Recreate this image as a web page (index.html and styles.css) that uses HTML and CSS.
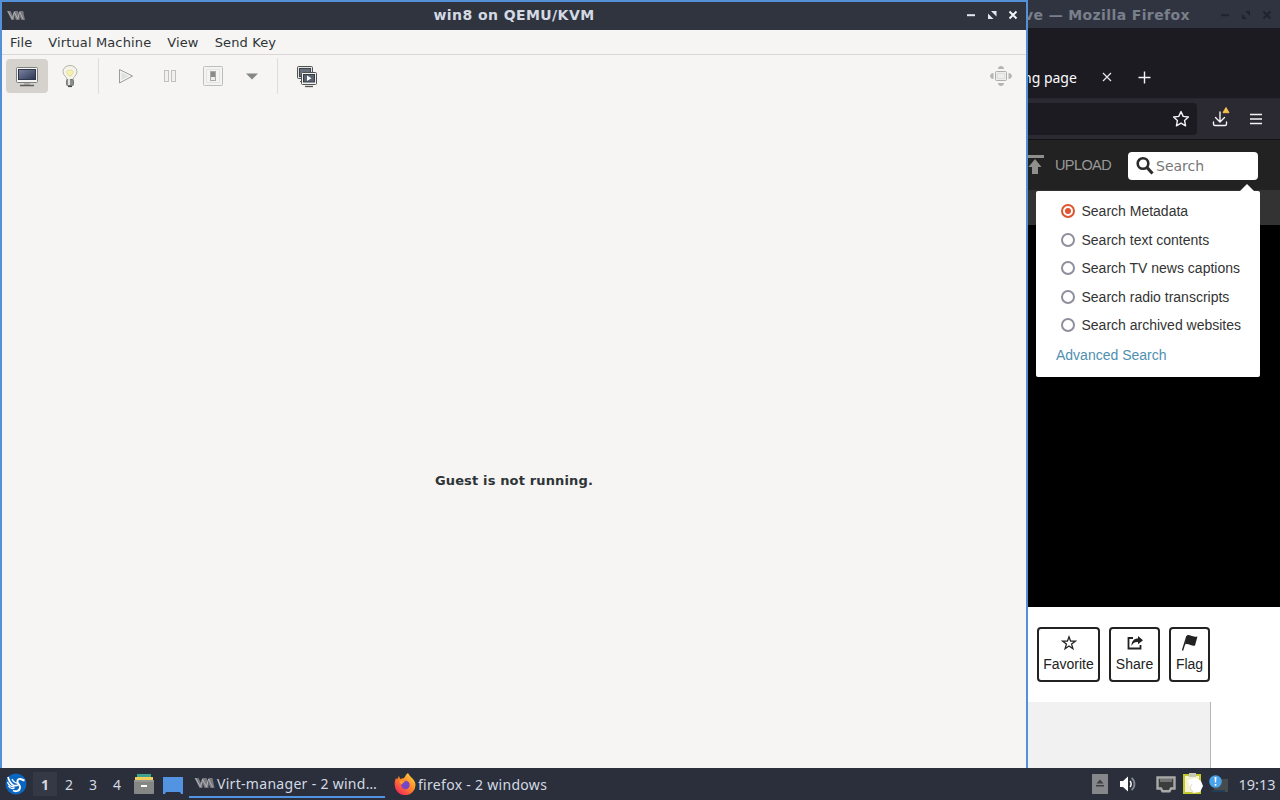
FILE: index.html
```
<!DOCTYPE html>
<html lang="en">
<head>
  <meta charset="UTF-8">
  <meta name="viewport" content="width=device-width, initial-scale=1.0">
  <title>win8 on QEMU/KVM</title>
  <link rel="stylesheet" href="styles.css">
</head>
<body>

  <svg class="defs" width="0" height="0">
    <defs>
      <linearGradient id="screen" x1="0" y1="0" x2="1" y2="1">
        <stop offset="0" stop-color="#7b86a4"/>
        <stop offset="1" stop-color="#2c3450"/>
      </linearGradient>
      <linearGradient id="fox" x1="1" y1="0" x2="0.2" y2="1">
        <stop offset="0" stop-color="#ffe14a"/>
        <stop offset="0.5" stop-color="#ff8a25"/>
        <stop offset="1" stop-color="#f0245e"/>
      </linearGradient>
      <symbol id="virt" viewBox="0 0 20 12">
        <path d="M0 1h4l3 6 1-6h4l2 6V1h4l2 10h-4l-2-4v4h-4l-2-5v5H5z" fill="#77787d"/>
        <path d="M1 1l5 9 2-8 4 8 2-8 4 8" stroke="#b4b5b9" stroke-width="1" fill="none"/>
      </symbol>
    </defs>
  </svg>

  <div class="desktop">

    <!-- Virtual machine window -->
    <section class="vm-window">
      <div class="vm-title">
        <svg class="vm-logo" width="18" height="11"><use href="#virt"/></svg>
        <h1>win8 on QEMU/KVM</h1>
        <svg class="win-buttons" width="56" height="14" viewBox="0 0 56 14">
          <path d="M3 7.2h8" stroke="#e4e7ee" stroke-width="2"/>
          <path d="M27 3h5.500v5.500zM24 5.500v5.500h5.500z" fill="#e4e7ee"/>
          <path d="M45.500 3.500l7 7M52.500 3.500l-7 7" stroke="#f3f4f8" stroke-width="2"/>
        </svg>
      </div>

      <nav class="menu">
        <span>File</span>
        <span>Virtual Machine</span>
        <span>View</span>
        <span>Send Key</span>
      </nav>

      <div class="toolbar">
        <button class="tool active">
          <svg width="24" height="24" viewBox="0 0 24 24">
            <rect x="1.500" y="3.500" width="21" height="15" rx="1" fill="#f4f4f2" stroke="#7e7f7c"/>
            <rect x="3.500" y="5.500" width="17" height="10" fill="url(#screen)" stroke="#30364a"/>
            <path d="M9 19h6v2H9z" fill="#aeb0ac"/>
            <path d="M5 21.500h14" stroke="#595b58" stroke-width="1.500"/>
          </svg>
        </button>
        <button class="tool bulb">
          <svg width="24" height="24" viewBox="0 0 24 24">
            <path d="M9 15.500c0-3-4-3.500-4-8a7 6 0 0 1 14 0c0 4.500-4 5-4 8z" fill="#f5f4e6" stroke="#b3b4ae"/>
            <path d="M8.500 8c1-2.500 6-2.500 7 0l-2.500 4h-2z" fill="#f6f3b2" stroke="#d8d593" stroke-width=".7"/>
            <rect x="8.500" y="15.500" width="7" height="6" rx="1" fill="#8c8e8b" stroke="#777975"/>
            <path d="M11 15v6" stroke="#e3e4e2" stroke-width="2"/>
            <path d="M10 22.500h4" stroke="#464845" stroke-width="1.200"/>
          </svg>
        </button>
        <i class="sep"></i>
        <button class="tool">
          <svg width="24" height="24" viewBox="0 0 24 24">
            <path d="M5.500 5.500v13.500L18.500 12z" fill="#f3f3f2" stroke="#9a9c99"/>
            <path d="M7.500 8.500v7.500l7-4z" fill="#dfe1de"/>
          </svg>
        </button>
        <button class="tool">
          <svg width="24" height="24" viewBox="0 0 24 24" fill="#f0f0ee" stroke="#c0c1be">
            <rect x="6.500" y="6.500" width="4" height="11"/>
            <rect x="13.500" y="6.500" width="4" height="11"/>
          </svg>
        </button>
        <button class="tool">
          <svg width="24" height="24" viewBox="0 0 24 24">
            <rect x="2.500" y="2.500" width="19" height="19" rx="1" fill="#f3f3f1" stroke="#bebfbc"/>
            <rect x="5.500" y="5.500" width="13" height="13" fill="#f4f4f2" stroke="#e4e4e2"/>
            <rect x="9.500" y="7.500" width="5" height="9" fill="#eee" stroke="#a9aaa7"/>
            <rect x="10" y="8" width="4" height="5" fill="#8a8c89"/>
          </svg>
        </button>
        <button class="tool narrow">
          <svg width="12" height="7" viewBox="0 0 12 7">
            <path d="M0 .5h12L6 6.500z" fill="#858784"/>
          </svg>
        </button>
        <i class="sep wide"></i>
        <button class="tool">
          <svg width="24" height="24" viewBox="0 0 24 24">
            <rect x="2.500" y="2.500" width="15" height="12" rx="1" fill="#e4e5e2" stroke="#50534f"/>
            <rect x="4.500" y="4.500" width="11" height="8" fill="#69717c" stroke="#3f454e"/>
            <path d="M5 17.500h5" stroke="#5c5e5b"/>
            <rect x="6.500" y="8.500" width="15" height="12" rx="1" fill="#f1f1ef" stroke="#50534f"/>
            <rect x="8.500" y="10.500" width="11" height="7.500" fill="#5b6370" stroke="#363c46"/>
            <path d="M12 11.500v5.500l4.500-2.700z" fill="#fff"/>
            <path d="M10 22.500h8" stroke="#50534f" stroke-width="1.300"/>
          </svg>
        </button>
        <button class="tool right">
          <svg width="24" height="24" viewBox="0 0 24 24">
            <rect x="6.500" y="7.500" width="11" height="9" rx="1" fill="#eeeeec" stroke="#adafac"/>
            <path d="M8.500 9.500h7v5h-7z" fill="none" stroke="#dddedb"/>
            <path d="M9 5c0-4 6-4 6 0zM9 19c0 4 6 4 6 0zM4.500 9c-4.500 0-4.500 6 0 6zM19.500 9c4.500 0 4.500 6 0 6z" fill="#b3b5b2"/>
          </svg>
        </button>
      </div>

      <div class="console">Guest is not running.</div>
    </section>

    <!-- Browser window behind it -->
    <section class="browser">
      <div class="browser-title">
        <span>ve — Mozilla Firefox</span>
        <svg width="56" height="14" viewBox="0 0 56 14">
          <path d="M3 7.200h8" stroke="#20232c" stroke-width="2"/>
          <path d="M27 3h5v5zM24 6v5h5z" fill="#20232c"/>
          <path d="M45.500 3.500l7 7M52.500 3.500l-7 7" stroke="#20232c" stroke-width="2"/>
        </svg>
      </div>
      <div class="tabs">
        <span class="tab-name">ng page</span>
        <svg width="10" height="10" viewBox="0 0 10 10"><path d="M1 1l8 8M9 1L1 9" stroke="#e8e8ec" stroke-width="1.200"/></svg>
        <svg class="new-tab" width="13" height="13" viewBox="0 0 13 13"><path d="M6.500 .5v12M.5 6.500h12" stroke="#f3f3f6" stroke-width="1.400"/></svg>
      </div>
      <div class="navbar">
        <div class="url">
          <svg width="18" height="18" viewBox="0 0 18 18">
            <path d="M9 1.600l2.200 4.800 5.200.6-3.800 3.600 1 5.200L9 13.200l-4.600 2.600 1-5.200L1.600 7l5.200-.6z" fill="none" stroke="#f3f3f6" stroke-width="1.400" stroke-linejoin="round"/>
          </svg>
        </div>
        <svg class="download" width="20" height="22" viewBox="0 0 20 22">
          <path d="M8 6v10M3.500 11.500L8 16l4.500-4.500M1.500 16v2q0 1.500 1.500 1.500h10q1.500 0 1.500-1.500v-2" fill="none" stroke="#f3f3f6" stroke-width="1.400" stroke-linecap="round"/>
          <path d="M14 1.500l3 5.200h-6z" fill="#f5c14c" stroke="#f5c14c" stroke-linejoin="round"/>
        </svg>
        <svg class="burger" width="12" height="12" viewBox="0 0 12 12"><path d="M0 1.500h12M0 6h12M0 10.500h12" stroke="#f3f3f6" stroke-width="1.300"/></svg>
      </div>

      <div class="site-header">
        <svg class="upload-icon" width="16" height="20" viewBox="0 0 16 20">
          <path d="M-2 0h18v3H-2zM7 4l6.500 8H10v7H4v-7H.5z" fill="#8f8f8b"/>
        </svg>
        <span class="upload">UPLOAD</span>
        <div class="search">
          <svg width="20" height="20" viewBox="0 0 20 20">
            <circle cx="8" cy="7.500" r="5.300" fill="none" stroke="#2b2b2b" stroke-width="2.600"/>
            <path d="M12 11.500l5.500 6" stroke="#2b2b2b" stroke-width="3.200"/>
          </svg>
          <span>Search</span>
        </div>

        <div class="search-menu">
          <div class="option"><i class="radio checked"></i>Search Metadata</div>
          <div class="option"><i class="radio"></i>Search text contents</div>
          <div class="option"><i class="radio"></i>Search TV news captions</div>
          <div class="option"><i class="radio"></i>Search radio transcripts</div>
          <div class="option"><i class="radio"></i>Search archived websites</div>
          <a class="advanced">Advanced Search</a>
        </div>
      </div>
      <div class="site-subheader"></div>
      <div class="stage"></div>
      <div class="page">
        <div class="actions">
          <button class="action favorite">
            <svg width="16" height="16" viewBox="0 0 16 16"><path d="M8 1.800l1.600 4.400h4.700l-3.700 2.900 1.300 4.600L8 11l-3.900 2.700 1.300-4.600-3.700-2.900h4.700z" fill="none" stroke="#222" stroke-width="1.300"/></svg>
            Favorite
          </button>
          <button class="action share">
            <svg width="18" height="16" viewBox="0 0 18 16">
              <path d="M7 3H2.500v10.500h12V10" fill="none" stroke="#222" stroke-width="1.800"/>
              <path d="M12 1l5 4.300-5 4V7C8.500 6.800 7 8 5.500 11 5.500 6 8 3.500 12 3.500z" fill="#222"/>
            </svg>
            Share
          </button>
          <button class="action flag">
            <svg width="18" height="18" viewBox="0 0 18 18">
              <path d="M6 2L1.500 16.500" stroke="#222" stroke-width="1.400"/>
              <path d="M6 1.500c3-1.500 4 2 10.500 1L14 11.500c-5 1-6-2.500-10-1z" fill="#222"/>
            </svg>
            Flag
          </button>
        </div>
        <div class="card"></div>
      </div>
    </section>

    <!-- Panel -->
    <footer class="panel">
      <svg class="start" width="22" height="22" viewBox="0 0 22 22">
        <circle cx="11" cy="11" r="10.500" fill="#0b66c0"/>
        <path d="M3 4c1 4 2 6 5 8 2 1 3 1 5 0" fill="none" stroke="#fff" stroke-width="1.800"/>
        <path d="M2.500 9c1 3 3 5 7 5M3.500 13c1.500 2.500 4 3 6 2" fill="none" stroke="#fff" stroke-width="1.300"/>
        <path d="M7 6c1 2 3 4 5 4" fill="none" stroke="#fff" stroke-width="1.300"/>
        <path d="M19.500 7.500l-4-1.500c-2-.5-3.500 1-3 3 .5 2.500 3 3 2.500 6-.5 3-4 4-7 2.500" fill="none" stroke="#fff" stroke-width="1.900"/>
      </svg>
      <div class="pager">
        <span class="current">1</span><span>2</span><span>3</span><span>4</span>
      </div>
      <svg class="files" width="20" height="20" viewBox="0 0 20 20">
        <path d="M3 0h14v4H3z" fill="#3fa68b"/>
        <path d="M1 3h18v4H1z" fill="#f1cf5c"/>
        <rect x="0" y="6" width="20" height="14" rx="1" fill="#858785"/>
        <path d="M0 7h20" stroke="#a5a7a5"/>
        <rect x="7" y="11" width="6" height="2" fill="#fff"/>
      </svg>
      <svg class="show-desktop" width="20" height="17" viewBox="0 0 20 17">
        <path d="M0 0h20v17h-2l-1-2H3l-1 2H0z" fill="#5294e2"/>
      </svg>
      <div class="task focused">
        <svg width="21" height="12"><use href="#virt"/></svg>
        <span>Virt-manager - 2 wind…</span>
      </div>
      <div class="task firefox">
        <svg width="22" height="22" viewBox="0 0 22 22">
          <path d="M2 5l1 1.500L5 3l1 3 4-1c1-1 2-4 4-5 1 2 2 3 4 5 2 2 3.500 4 3.500 7A10.300 10 0 0 1 .7 12C.5 9 1 7 2 5z" fill="url(#fox)"/>
          <circle cx="11.500" cy="12" r="4.200" fill="#7546c9"/>
          <path d="M5.500 8c2-.5 4-.5 6 1-2 .2-3 1-3.500 2.200C6.500 11 5.500 10 5.500 8z" fill="#ff9d2e"/>
        </svg>
        <span>firefox - 2 windows</span>
      </div>
      <div class="tray">
        <svg class="eject" width="16" height="20" viewBox="0 0 16 20">
          <rect width="16" height="20" fill="#85878a"/>
          <path d="M4.500 9.500L8 5.500l3.500 4zM4 11h8v1.500H4z" fill="#3d3f43"/>
        </svg>
        <svg class="volume" width="16" height="16" viewBox="0 0 16 16">
          <path d="M0 5h3l5-4.500v15L3 11H0z" fill="#fff"/>
          <path d="M10 5c1.500 1.500 1.500 4.500 0 6" fill="none" stroke="#fff" stroke-width="1.500"/>
          <path d="M11.500 2c4 3 4 9 0 12" fill="none" stroke="#858891" stroke-width="1.800"/>
        </svg>
        <svg class="network" width="20" height="17" viewBox="0 0 20 17">
          <path d="M1.500 1.500h17v11h-3.500l-1.500 2.800h-7L5 12.500H1.500z" fill="#3b3d3c" stroke="#a9aaa8" stroke-width="2.400"/>
          <path d="M5 3v3M7 3v3M9 3v3M11 3v3M13 3v3M15 3v3" stroke="#c4c5c2" stroke-width=".8"/>
        </svg>
        <svg class="clipboard" width="20" height="22" viewBox="0 0 20 22">
          <path d="M1 3h16v18H1z" fill="#f4f2cf" stroke="#c5c92f" stroke-width="2"/>
          <path d="M6 1h7v4H6z" fill="#c5c7bd"/>
          <path d="M5 8l8-2 5 3 2 5-3 6-7 1-3-5z" fill="#fff"/>
          <path d="M9 12l-2 4 3 4" fill="none" stroke="#d0d0c8" stroke-width=".8"/>
        </svg>
        <svg class="updates" width="20" height="19" viewBox="0 0 20 19">
          <rect x="5" y="4" width="14" height="13" fill="#464b4e"/>
          <path d="M3 16h13" stroke="#263d56" stroke-width="2"/>
          <circle cx="6.500" cy="6.500" r="6.300" fill="#49a3ea"/>
          <path d="M5.500 2h2l-.4 5.500H5.900zM5.700 9h1.700v1.800H5.700z" fill="#fff"/>
        </svg>
        <span class="clock">19:13</span>
      </div>
    </footer>
  </div>

</body>
</html>
```
FILE: styles.css
```
* {
  box-sizing: border-box;
}

body {
  margin: 0;
  background: #000;
  font-family: "DejaVu Sans", sans-serif;
  font-size: 13px;
  color: #2e3436;
}

svg {
  display: block;
  flex: none;
}

span {
  white-space: nowrap;
}

.defs {
  position: absolute;
}

.desktop {
  display: grid;
  grid-template-columns: 1028px 252px;
  grid-template-rows: 768px 32px;
  width: 1280px;
  height: 800px;
  overflow: hidden;
}

/* Virtual machine window */
.vm-window {
  display: flex;
  flex-direction: column;
  background: #f6f5f4;
  border: 2px solid #5490d8;
  border-bottom: 0;
}

.vm-title {
  display: grid;
  grid-template-columns: 62px 1fr 62px;
  align-items: center;
  height: 28px;
  background: #2f343f;
  color: #d3dae3;
}

.vm-logo {
  margin: 0 0 2px 5px;
}

.vm-title h1 {
  margin: 0;
  padding-bottom: 2px;
  font-size: 14px;
  line-height: 18px;
  text-align: center;
  letter-spacing: 0.42px;
}

.win-buttons {
  margin-bottom: 2px;
}

.menu {
  display: flex;
  gap: 16px;
  height: 25px;
  padding-left: 8px;
  line-height: 25px;
  letter-spacing: 0.13px;
  border-bottom: 1px solid #dad8d6;
}

.toolbar {
  display: flex;
  align-items: center;
  height: 42px;
  padding: 0 4px;
}

.tool {
  display: flex;
  align-items: center;
  justify-content: center;
  width: 42px;
  height: 34px;
  margin-right: 1.5px;
  padding: 0;
  border: 0;
  border-radius: 4px;
  background: none;
}

.tool.active {
  background: #d5d2cd;
}

.tool.bulb {
  padding-right: 2px;
}

.tool.narrow {
  width: 34px;
  padding-right: 2px;
}

.tool.right {
  margin: 0 0 0 auto;
}

.sep {
  width: 1px;
  height: 36px;
  margin: 0 6px 0 5px;
  background: #dfddda;
}

.sep.wide {
  margin: 0 8px 0 6px;
}

.console {
  display: flex;
  flex: 1;
  align-items: center;
  justify-content: center;
  padding-top: 96px;
  font-weight: bold;
  letter-spacing: 0.15px;
}

/* Browser */
.browser {
  display: flex;
  flex-direction: column;
  background: #fff;
  overflow: hidden;
}

.browser > div {
  flex: none;
}

.browser-title {
  display: flex;
  align-items: center;
  justify-content: space-between;
  height: 28px;
  padding: 2px 5px 0 0;
  background: #303440;
  color: #797f8b;
  font-size: 14px;
  font-weight: bold;
}

.browser-title span {
  margin-left: -4px;
  padding-bottom: 1px;
  letter-spacing: 0.38px;
}

.browser-title svg {
  margin-right: 1px;
}

.tabs {
  display: flex;
  align-items: center;
  height: 70px;
  padding-top: 28px;
  background: #1c1b22;
  color: #fbfbfe;
  font-family: "Noto Sans", sans-serif;
  font-size: 14px;
}

.tab-name {
  width: 74px;
  margin-left: -5px;
}

.tabs .tab-name + svg {
  margin-left: 5px;
}

.new-tab {
  margin-left: 26px;
}

.navbar {
  display: flex;
  align-items: center;
  height: 42px;
  background: #2b2a33;
  border-top: 1px solid #27262e;
  border-bottom: 1px solid #131217;
}

.url {
  display: flex;
  align-items: center;
  justify-content: flex-end;
  width: 169px;
  height: 32px;
  padding-right: 7px;
  background: #1c1b22;
  border-radius: 0 4px 4px 0;
}

.download {
  margin: -5px 0 0 15px;
}

.burger {
  margin-left: 18px;
}

.site-header {
  position: relative;
  display: flex;
  align-items: center;
  height: 50px;
  background: #222;
  font-family: "Liberation Sans", Arial, sans-serif;
}

.upload {
  margin-left: 11px;
  color: #999;
  font-size: 14.5px;
  letter-spacing: -0.6px;
}

.search {
  display: flex;
  align-items: center;
  gap: 1px;
  width: 130px;
  height: 28px;
  margin: 2px 0 0 17px;
  padding-left: 7px;
  background: #fff;
  border-radius: 4px;
  color: #777;
  font-family: "DejaVu Sans", sans-serif;
  font-size: 14px;
}

/* Dropdown that hangs below the search box */
.search-menu {
  position: absolute;
  top: 51px;
  left: 8px;
  width: 224px;
  height: 186px;
  padding: 6px 0 0 25px;
  background: #fff;
  border-radius: 2px;
  color: #333;
  font-size: 14px;
}

.search-menu::before {
  content: "";
  position: absolute;
  top: -7px;
  left: 204px;
  border: 7px solid transparent;
  border-top: 0;
  border-bottom-color: #fff;
}

.option {
  display: flex;
  align-items: center;
  gap: 6.5px;
  height: 28.5px;
  white-space: nowrap;
}

.radio {
  display: flex;
  align-items: center;
  justify-content: center;
  width: 14px;
  height: 14px;
  border: 2px solid #8f8f9d;
  border-radius: 50%;
}

.radio.checked {
  border-color: #e0542f;
}

.radio.checked::before {
  content: "";
  width: 6px;
  height: 6px;
  border-radius: 50%;
  background: #e0542f;
}

.advanced {
  display: block;
  margin: 6px 0 0 -5px;
  line-height: 18px;
  color: #4f8fb0;
}

.site-subheader {
  height: 35px;
  background: #333;
}

.stage {
  height: 382px;
  background: #000;
}

.page {
  padding-top: 20px;
}

.actions {
  display: flex;
  gap: 9px;
  margin-left: 9px;
}

.action {
  display: flex;
  flex-direction: column;
  align-items: center;
  height: 55px;
  padding: 6px 0 0;
  border: 2px solid #222;
  border-radius: 4px;
  background: #fff;
  color: #222;
  font-family: "Liberation Sans", Arial, sans-serif;
  font-size: 14px;
  line-height: 18px;
}

.action svg {
  height: 18px;
  margin: -1px 0 3px;
}

.favorite {
  width: 63px;
}

.share {
  width: 51px;
}

.flag {
  width: 41px;
}

.card {
  width: 183px;
  height: 70px;
  margin-top: 20px;
  background: #f1f1f1;
  border-right: 1px solid #b5b5b5;
}

/* Panel */
.panel {
  grid-column: 1 / 3;
  display: flex;
  align-items: center;
  padding-left: 5px;
  background: #2a2f3b;
  color: #d3dae3;
  font-family: "Noto Sans", sans-serif;
  font-size: 14px;
}

.pager {
  display: flex;
  margin-left: 6px;
}

.pager span {
  width: 24px;
  height: 24px;
  line-height: 26px;
  text-align: center;
}

.pager .current {
  background: #343945;
  font-weight: bold;
}

.files {
  margin-left: 5px;
}

.show-desktop {
  margin: 2px 0 0 9px;
}

.task {
  display: flex;
  align-items: center;
  gap: 2px;
  height: 28px;
  letter-spacing: 0.3px;
}

.focused {
  width: 196px;
  margin-left: 6px;
  padding-left: 5px;
  border-bottom: 2px solid #5294e2;
}

.firefox {
  margin-left: 9px;
}

.tray {
  display: flex;
  align-items: center;
  margin-left: auto;
  padding-right: 4.5px;
}

.volume {
  margin-left: 12px;
}

.network {
  margin-left: 20px;
}

.clipboard {
  margin: -2px 0 0 7px;
}

.updates {
  margin-left: 6px;
}

.clock {
  margin-left: 9px;
  font-size: 14.5px;
}
```
